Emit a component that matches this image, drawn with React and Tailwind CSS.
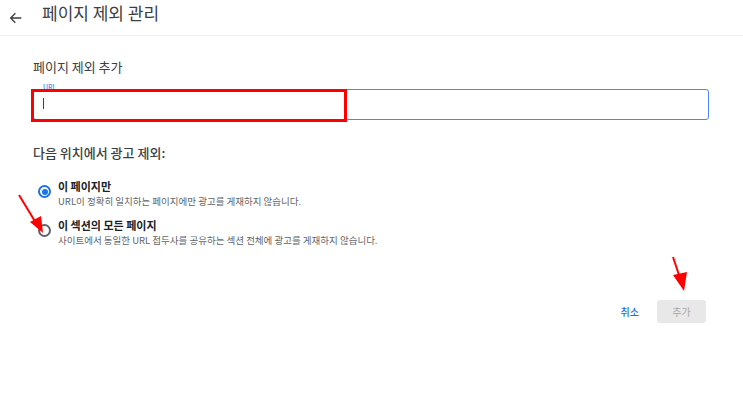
import React, { useState } from 'react';

const font = { fontFamily: '"Noto Sans CJK KR", "Noto Sans", Roboto, sans-serif' };

const Radio = ({ checked, title, desc, onClick }) => (
  <div className="flex items-start gap-[7px] cursor-pointer" onClick={onClick}>
    <div
      className={
        'mt-[6px] w-[13px] h-[13px] rounded-full border-2 flex items-center justify-center shrink-0 ' +
        (checked ? 'border-[#1a73e8]' : 'border-[#5f6368]')
      }
    >
      {checked && <div className="w-[6px] h-[6px] rounded-full bg-[#1a73e8]" />}
    </div>
    <div className="flex flex-col">
      <span className="text-[11px] leading-[15px] font-bold text-[#202124]">{title}</span>
      <span className="text-[9.5px] leading-[14px] text-[#5f6368]">{desc}</span>
    </div>
  </div>
);

const App = () => {
  const [scope, setScope] = useState('page');
  const [url, setUrl] = useState('');

  return (
    <div className="relative w-full h-[398px] bg-white overflow-hidden" style={font}>
      {/* header */}
      <div className="h-[36px] border-b border-[#f1f1f1] flex items-center">
        <svg className="ml-[8px] w-[16px] h-[16px]" viewBox="0 0 24 24" fill="none" stroke="#3c4043" strokeWidth="2">
          <path d="M20 12H5M11 5l-7 7 7 7" />
        </svg>
        <h1 className="ml-[18px] -mt-[9px] text-[17px] text-[#3c4043]">페이지 제외 관리</h1>
      </div>

      <div className="px-[33px]">
        <h2 className="mt-[22px] text-[13px] leading-[18px] text-[#3c4043]">페이지 제외 추가</h2>

        {/* url field */}
        <div className="relative mt-[13px] mr-[1px] h-[31px] border-[1.5px] border-[#4a89f3] rounded-[3px]">
          <span className="absolute -top-[7px] left-[8px] bg-white px-[1px] text-[7px] leading-[9px] text-[#1a73e8]">URL</span>
          <input
            value={url}
            onChange={(e) => setUrl(e.target.value)}
            className="w-full h-full px-[9px] outline-none text-[12px] bg-transparent"
          />
          <div className="absolute left-[9px] top-[8px] w-[1px] h-[11px] bg-[#3c4043]" />
        </div>

        <p className="mt-[25px] text-[13px] leading-[16px] font-medium text-[#3c4043]">다음 위치에서 광고 제외:</p>

        <div className="mt-[18px] ml-[5px] flex flex-col gap-[10px]">
          <Radio
            checked={scope === 'page'}
            onClick={() => setScope('page')}
            title="이 페이지만"
            desc="URL이 정확히 일치하는 페이지에만 광고를 게재하지 않습니다."
          />
          <Radio
            checked={scope === 'section'}
            onClick={() => setScope('section')}
            title="이 섹션의 모든 페이지"
            desc="사이트에서 동일한 URL 접두사를 공유하는 섹션 전체에 광고를 게재하지 않습니다."
          />
        </div>

        <div className="mt-[53px] mr-[4px] flex items-center justify-end gap-[17px]">
          <button className="text-[10px] font-medium text-[#1a73e8] px-[1px]">취소</button>
          <button className="w-[49px] h-[23px] rounded-[3px] bg-[#e8e8e8] text-[10px] text-[#a8a8a8]">추가</button>
        </div>
      </div>

      {/* annotations */}
      <div className="absolute left-[31px] top-[89px] w-[316px] h-[33px] border-[3px] border-[#ff0000]" />
      <svg className="absolute left-0 top-0 pointer-events-none" width="743" height="398">
        <line x1="19" y1="195" x2="36" y2="223" stroke="#ff0000" strokeWidth="2" />
        <polygon points="43,233 30,222 41,216" fill="#ff0000" />
        <line x1="673" y1="257" x2="680" y2="278" stroke="#ff0000" strokeWidth="2" />
        <polygon points="684,291 673,275 687,272" fill="#ff0000" />
      </svg>
    </div>
  );
};

export default App;
